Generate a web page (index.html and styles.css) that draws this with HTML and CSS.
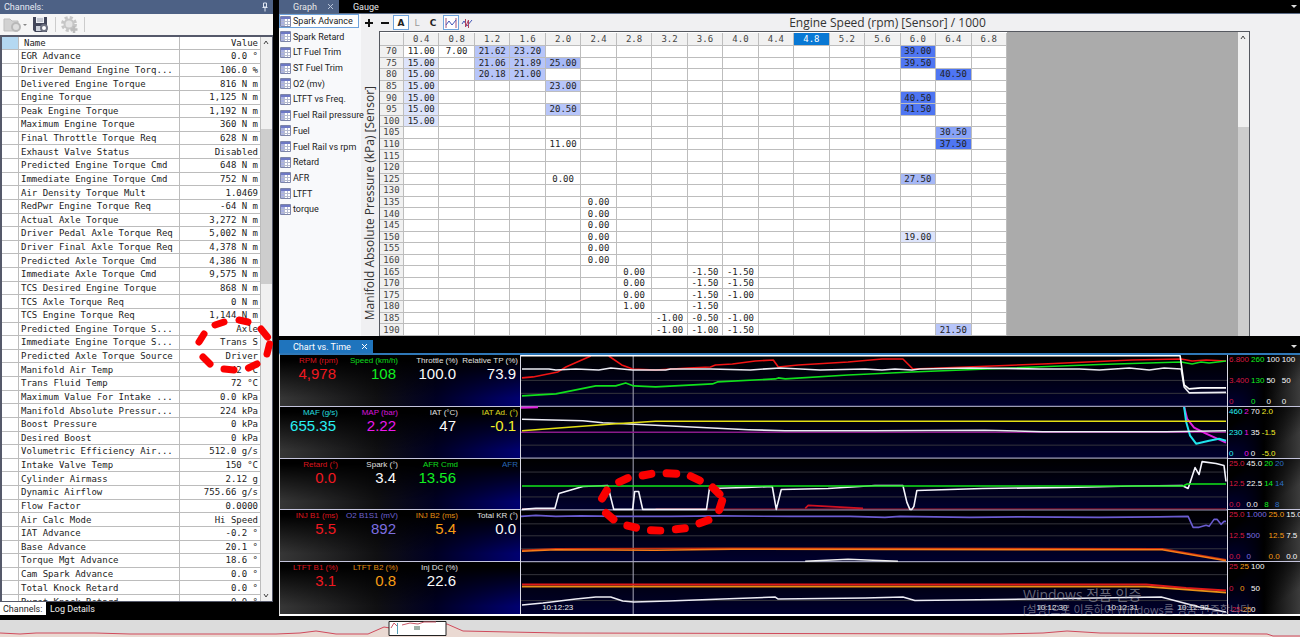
FILE: index.html
```html
<!DOCTYPE html>
<html lang="en">
<head>
<meta charset="utf-8">
<title>Log viewer</title>
<link rel="stylesheet" href="styles.css">
</head>
<body>
<div class="app">
  <aside class="channels">
    <header class="panel-title"><span>Channels:</span>
      <svg class="pin" viewBox="0 0 8 10"><path d="M2.5 1h3v4h-3zM1.5 5.5h5M4 5.500v4" fill="none" stroke="#dfe6f2"/></svg>
    </header>
    <div class="channel-tools">
      <button class="tool" aria-label="Open"><svg width="24" height="20" viewBox="0 0 24 20"><path d="M1 4h6l2 2h6v10H1z" fill="#d2d2d2" stroke="#bdbdbd"/><circle cx="13" cy="12" r="4" fill="#dedede" stroke="#b8b8b8" stroke-width="2"/><path d="M20 9h4l-2 2z" fill="#888"/></svg></button>
      <button class="tool" aria-label="Save"><svg width="18" height="20" viewBox="0 0 18 20"><path d="M1 2h14v15H3l-2-2z" fill="#43475a"/><path d="M4 2h8v6H4z" fill="#eef0f4"/><path d="M5 4h6M5 6h6" stroke="#9a9fae"/><path d="M4 11h8v5H4z" fill="#cfd3dc"/><circle cx="12" cy="13" r="3" fill="#fff" stroke="#6d7180" stroke-width="2"/></svg></button>
      <span class="rule"></span>
      <button class="tool" aria-label="Settings"><svg width="18" height="20" viewBox="0 0 18 20"><circle cx="8" cy="9" r="6.500" fill="none" stroke="#c6c6c6" stroke-width="3" stroke-dasharray="3 2.100"/><circle cx="8" cy="9" r="4.500" fill="#e4e4e4" stroke="#c6c6c6" stroke-width="2"/><path d="M13 11v7M9.500 14.500h7" stroke="#bcbcbc" stroke-width="2.500"/></svg></button>
      <span class="rule"></span>
    </div>
    <div class="list">
      <div class="list-view">
        <table class="channel-table">
          <colgroup><col class="c-mark"><col><col class="c-value"></colgroup>
          <thead><tr><th class="mark"></th><th class="name">Name</th><th class="value">Value</th></tr></thead>
          <tbody id="channel-rows"></tbody>
        </table>
      </div>
      <div class="scroll list-scroll">
        <svg viewBox="0 0 10 10"><path d="M3 7l2-3 2 3" fill="none" stroke="#444"/></svg>
        <span class="thumb"></span>
        <svg viewBox="0 0 10 10"><path d="M3 3l2 3 2-3" fill="none" stroke="#444"/></svg>
      </div>
    </div>
    <nav class="bottom-tabs"><button class="on">Channels:</button><button>Log Details</button></nav>
    <svg class="marker" width="80" height="60" viewBox="195 316 80 60"><path d="M199 342L204 334M215 325L224 322M239 320L248 322M261 329L267.500 337M269.500 344L267 354M248.500 368L257 364M224 369L234 370M203 357L210 364" stroke="#fb0000" stroke-width="7" stroke-linecap="round"/></svg>
  </aside>

  <main class="main">
    <section class="graph">
      <nav class="tabs">
        <button class="tab on">Graph<svg width="8" height="8" viewBox="0 0 8 8"><path d="M1 1l5 5M6 1l-5 5" stroke="#b9c5da"/></svg></button>
        <button class="tab">Gauge</button>
        <span class="more"></span>
      </nav>
      <div class="graph-body">
        <div class="side"><ul class="plots" id="plots"></ul></div>
        <div class="graph-view">
          <div class="graph-tools">
            <button aria-label="Add"><svg width="10" height="10"><path d="M5 1v8M1 5h8" stroke="#111" stroke-width="2"/></svg></button>
            <button aria-label="Remove"><svg width="10" height="10"><path d="M1 5h8" stroke="#111" stroke-width="2"/></svg></button>
            <button class="boxed">A</button>
            <button class="dim">L</button>
            <button>C</button>
            <button class="boxed lines" aria-label="Lines"><svg width="12" height="10"><path d="M1 0v10M11 0v10" stroke="#a0527e"/><path d="M1 7l3-4 3 4 4-5" fill="none" stroke="#4356b8"/></svg></button>
            <button aria-label="Compare"><svg width="12" height="10"><path d="M1 6l2-3 3 5 5-6" fill="none" stroke="#4356b8"/><path d="M4.500 1v8l3-7v8" fill="none" stroke="#b0405e"/></svg></button>
            <h2>Engine Speed (rpm) [Sensor] / 1000</h2>
          </div>
          <div class="matrix-area">
            <div class="axis"><span>Manifold Absolute Pressure (kPa) [Sensor]</span></div>
            <div class="matrix-box">
              <table class="matrix"><thead><tr id="matrix-head"></tr></thead><tbody id="matrix-rows"></tbody></table>
              <div class="scroll matrix-scroll"><svg viewBox="0 0 10 10"><path d="M3 7l2-3 2 3" fill="none" stroke="#444"/></svg><span class="thumb"></span></div>
            </div>
          </div>
        </div>
      </div>
    </section>

    <section class="chart">
      <nav class="tabs">
        <button class="tab active">Chart vs. Time<svg width="8" height="8" viewBox="0 0 8 8"><path d="M1 1l5 5M6 1l-5 5" stroke="#fff"/></svg></button>
        <span class="more"></span>
      </nav>
      <div class="chart-body">
        <div class="readings" id="readings"></div>
        <div class="plot">
          <svg class="traces" viewBox="0 0 708 260" preserveAspectRatio="none">
            <defs><linearGradient id="sky" x1="0" y1="0" x2="0" y2="1"><stop offset="0" stop-color="#000"/><stop offset=".3" stop-color="#00000c"/><stop offset="1" stop-color="#00002e"/></linearGradient></defs>
            <g fill="url(#sky)"><path d="M0 0h708v52H0z"/><path d="M0 52h708v52H0z"/><path d="M0 104h708v52H0z"/><path d="M0 156h708v52H0z"/><path d="M0 208h708v52H0z"/></g>
            <path d="M0 25.500h708M0 38.500h708M0 90.500h708M0 117.500h708M0 142.500h708M0 169.500h708M0 181.500h708M0 194.500h708M0 220.500h708M0 246.500h708" stroke="#34343c"/>
            <path d="M0 51.500h708M0 103.500h708M0 155.500h708M0 207.500h708" stroke="#c4c4dc"/>
            <path d="M112.500 0v260" stroke="#a9a9bb"/>
            <g fill="none" stroke-width="1.600" stroke-linejoin="round">
              <path stroke="#f01414" d="M1 23L12 22 37 17 45 12 70 1M88 1L101 10 112 14 135 15 168 13 190 12 195 10 212 9 235 6 253 5 258 12 278 10 328 7 362 4 383 4 393 14 447 12 523 9 613 5 662 4 673 6 687 5 707 6"/>
              <path stroke="#10e01c" d="M1 41L35 39 55 35 75 31 95 31 105 28 113 31 135 32 192 29 197 27 255 24 258 23 265 24 328 20 392 17 480 13.500 580 9.500 662 7 673 9 682 7 690 8 707 6"/>
              <path stroke="#ececf4" d="M1 14H28L35 15 55 14 78 15 90 13 112 15 145 15 150 14 190 14 230 15 260 13 300 15 345 14 362 15 375 14 392 15 400 14 450 13 520 14 560 14 580 15 610 13 630 15 645 13 662 14 665 32 670 38 707 37.500"/>
              <path stroke="#fff" d="M0 .800H661L665 30 670 34 682 33 707 33"/>
              <path stroke="#8a1a8a" d="M0 77.500H707"/>
              <path stroke="#e020e0" stroke-width="2" d="M0 53L17 52.500M665 52L668 64 675 73 687 79 707 88"/>
              <path stroke="#20e4ec" stroke-width="2" d="M665 52L667 67 671 81 677 89 690 86 700 84 707 86"/>
              <path stroke="#ececf4" d="M1 64.500L62 66 82 68 145 71 228 75 265 76 353 76 465 75.500 523 77 647 77 707 76"/>
              <path stroke="#e4e014" d="M1 76L95 69 135 66.500 707 66.500"/>
              <path stroke="#8c1428" stroke-width="1" d="M135 154.500H707M1 154.500H34"/>
              <path stroke="#d01020" d="M285 154L288 151 343 154"/>
              <path stroke="#f4f4fc" d="M1 155L15 154 34 154 38 139 62 132 87 131 93 155H112L114 137 118 137 122 155H186L189 134 225 133 252 132 256 155 261 135 308 134 355 131 383 131 387 148 390 155 392 155 394 152 397 136 463 134 547 133 613 131.500 663 131 669 134 676 113 680 120 683 107 697 109 705 111 707 127"/>
              <path stroke="#10e41a" d="M1 131.500L664 131.500 668 129.500 707 129.500"/>
              <path stroke="#6a5cd0" d="M0 162L15 161 35 162 60 161.500 95 162 150 162 200 161.500 270 162 330 162 365 163 380 162 450 163 500 162.500 580 163 640 162.500 669 162 674 173 680 173 687 171 690 172 695 165 698 165 702 170 705 167 707 167"/>
              <path stroke="#c83010" d="M1 196L35 194.500 212 194 643 194.500 707 205.500"/>
              <path stroke="#f87c18" d="M1 197L35 195.500 135 196 212 195 643 195.500 707 206.500"/>
              <path stroke="#eee" d="M285 207L328 205 378 207"/>
              <path stroke="#e01818" stroke-width="2" d="M1 230.500H627L667 234 707 236.500"/>
              <path stroke="#e89018" d="M1 232.500H627L707 238.500"/>
              <path stroke="#ececf4" d="M1 251L22 249 55 245 75 243 90 243 102 247 113 248 148 247 202 245 255 243 258 245 345 244 383 243 395 246.500 480 245.500 642 243 680 253 707 258"/>
            </g>
            <g transform="translate(-520 -355)"><path d="M618.500 482.500L627 478.500M642 476L650.700 474.300M666 473.700L675.700 474.300M690.300 476.700L699.300 481M712.300 488L719 494.700M721.700 501.300L718.700 510.700M699 524L708 520.700M675.300 530L684.300 529M650.300 531L659.700 531.300M626.700 526.300L635.300 528.300M605.300 513.700L612.700 520M601.300 499L606 491" stroke="#fb0000" stroke-width="8" stroke-linecap="round"/></g>
          </svg>
          <span class="time t1">10:12:23</span><span class="time t2">10:12:30</span><span class="time t3">10:12:31</span><span class="time t4">10:12:32</span>
        </div>
        <div class="scales" id="scales"></div>
        <div class="watermark" lang="ko"><p class="wm-title">Windows 정품 인증</p><p>[설정]으로 이동하여 Windows를 정품 인증합니다</p></div>
      </div>
    </section>
  </main>

  <footer class="overview">
    <svg viewBox="0 0 1300 17" preserveAspectRatio="none">
      <path d="M0 13L20 14 36 13 95 13 130 14 276 14 300 13 316 11 336 14 368 14 384 7 390 8 447 4 463 11 509 12 560 13 1000 14 1043 13 1067 11 1100 13 1267 14 1273 16 1300 16V17H0z" fill="#ead9d2"/>
      <path d="M0 13L20 14 36 13 95 13 130 14 276 14 300 13 316 11 336 14 368 14 384 7 390 8 447 4 463 11 509 12 560 13 1000 14 1043 13 1067 11 1100 13 1267 14 1273 16 1300 16" fill="none" stroke="#d04a5c"/>
      <path d="M389 1.500h57v14h-57z" fill="#fff" stroke="#222"/>
      <path d="M391 8L394 3 397 6M402 5L410 3 418 4 424 2 436 2" fill="none" stroke="#c85868"/><path d="M397.500 3v11" stroke="#58a0b8"/><path d="M414 6h6v4h-6z" fill="#9fb0a8"/>
    </svg>
  </footer>
</div>
<script src="app.js"></script>
</body>
</html>
```
FILE: styles.css
```css
* { box-sizing: border-box; }
body { margin: 0; font: 9px/12px Roboto, "Noto Sans", sans-serif; color: #222; background: #000; }
button { border: 0; padding: 0; margin: 0; background: none; font: inherit; color: inherit; }
svg { display: block; flex: none; }
h2, p, ul { margin: 0; padding: 0; }
table { border-spacing: 0; table-layout: fixed; }
th, td { padding: 0; font-weight: 400; white-space: nowrap; }

.app { display: grid; grid-template: minmax(0, 1fr) 17px / 279px minmax(0, 1fr); height: 100vh; }

/* channel list */
.channels { position: relative; display: flex; flex-direction: column; min-height: 0; margin: 0 6px 5px 0; }
.panel-title { display: flex; justify-content: space-between; align-items: center; height: 14px; padding: 0 4px; background: #4d6185; color: #e6ebf4; }
.pin { width: 8px; height: 10px; }
.channel-tools { display: flex; align-items: center; gap: 5px; height: 21px; padding: 0 3px; background: #f6f6f6; }
.rule { width: 1px; height: 15px; background: #ccc; }
.list { display: flex; flex: 1; min-height: 0; border: solid #55596a; border-width: 2px 1px 1px 2px; background: #fff; }
.list-view { flex: 1; min-height: 0; overflow: hidden; }
.channel-table { width: 100%; height: calc(100% + 8px); font: 9px/12px "DejaVu Sans Mono", monospace; }
.channel-table th, .channel-table td { border: solid #bcbcbc; border-width: 0 1px 1px 0; overflow: hidden; }
.channel-table .c-mark { width: 17px; }
.channel-table .c-value { width: 81px; }
.channel-table .mark { background: #b4d8f1; }
.channel-table .name { text-align: left; padding-left: 5px; }
.channel-table td.name { padding-left: 2px; }
.channel-table .value { text-align: right; padding-right: 2px; }
.scroll { display: flex; flex-direction: column; width: 11px; background: #f0f0f0; }
.scroll svg { width: 10px; height: 10px; }
.scroll .thumb { background: #cdcdcd; }
.list-scroll .thumb { height: 155px; margin: 82px 0 auto; }
.bottom-tabs { display: flex; height: 13px; color: #eee; }
.bottom-tabs button { padding: 0 4px; }
.bottom-tabs .on { width: 46px; padding: 0 3px; background: #fff; color: #222; text-align: left; }
.marker { position: absolute; left: 195px; top: 316px; }

/* tabs */
.main { display: grid; grid-template-rows: minmax(0, 336fr) minmax(0, 280fr); min-width: 0; padding-bottom: 4px; }
.tabs { display: flex; align-items: center; color: #e8e8e8; }
.tab { display: flex; align-items: center; gap: 10px; height: 13px; padding: 0 4px 0 14px; }
.tab.on { background: #4d6185; }
.tab.active { background: #1f74bd; color: #fff; }
.more { margin: 0 3px 0 auto; border: solid transparent; border-width: 3px 3px 0; border-top-color: #ddd; }

/* graph */
.graph { display: flex; flex-direction: column; min-height: 0; }
.graph-body { display: flex; flex: 1; min-height: 0; border-top: 1px solid #5b6b86; background: #f0f0f2; }
.side { width: 82px; flex: none; background: #f8f9fb; }
.plots { display: grid; grid-auto-rows: 1fr; height: 204px; list-style: none; }
.plots button { display: flex; align-items: center; gap: 2px; width: 80px; height: 14px; padding: 0 1px; white-space: nowrap; }
.plots .on { border: 1px solid #6ea3dc; padding: 0; background: #fff; }
.graph-view { display: flex; flex-direction: column; flex: 1; min-width: 0; }
.graph-tools { display: flex; align-items: center; height: 17px; }
.graph-tools button { display: grid; place-items: center; flex: none; width: 16px; height: 15px; font: 700 9px/12px "DejaVu Sans", sans-serif; }
.graph-tools .boxed { border: 1px solid #6ea3dc; background: #fff; }
.graph-tools .lines { margin-left: 2px; }
.graph-tools .dim { color: #999; font-weight: 400; }
.graph-tools h2 { margin: 0 auto; font: 12px/16px "Open Sans", sans-serif; color: #333; }
.matrix-area { display: flex; flex: 1; min-height: 0; }
.axis { display: flex; align-items: flex-end; width: 18px; padding-bottom: 16px; flex: none; }
.axis span { writing-mode: vertical-rl; transform: rotate(180deg); font: 12px/18px "Open Sans", sans-serif; color: #333; white-space: nowrap; }
.matrix-box { display: flex; justify-content: space-between; flex: 1; margin-right: 50px; border: solid #55585f; border-width: 1px 1px 0 1px; background: #ababab; }
.matrix { width: 627px; height: 100%; padding-top: 1px; font: 9px/10px "DejaVu Sans Mono", monospace; text-align: center; background: #fff; }
.matrix th, .matrix td { border: solid #bdbdbd; border-width: 0 1px 1px 0; }
.matrix th { background: #f1f1f1; color: #444; }
.matrix thead th { height: 13px; line-height: 12px; }
.matrix th.row { width: 24px; }
.matrix .picked { background: #0878d4; color: #fff; }
.matrix .h1 { background: #dde4fb; }
.matrix .h2 { background: #b7c5f9; }
.matrix .h3 { background: #a6b8f6; }
.matrix .h4 { background: #88a2f7; }
.matrix .h5 { background: #4f76f2; }
.matrix-scroll svg { margin-bottom: 85px; }
.matrix-scroll .thumb { flex: 1; }

/* time chart */
.chart { display: flex; flex-direction: column; min-height: 0; padding-top: 4px; }
.chart-body { position: relative; display: grid; grid-template-columns: 240px minmax(0, 1fr) 72px; flex: 1; min-height: 0; border-top: 2px solid #2f78b8; border-left: 1px solid #ddd; border-bottom: 2px solid #fff; font: 8px/9px "Liberation Sans", Arial, sans-serif; }
.readings, .scales { display: grid; grid-template-rows: repeat(5, minmax(0, 1fr)); min-height: 0; }
.reading-row { display: grid; grid-template-columns: repeat(4, 60px); padding-top: 1px; border-bottom: 1px solid #c4c4dc; text-align: right; background: linear-gradient(#000 10%, transparent 85%), linear-gradient(to right, #363636, #101012 40%, #000024 65%, #000070); }
.reading-row:last-child, .scale-row:last-child { border-bottom: 0; }
.reading-row p { padding-right: 2px; white-space: nowrap; opacity: .9; }
.reading-row strong { display: block; padding-right: 4px; font-size: 15px; line-height: 18px; font-weight: 400; }
.plot { position: relative; border: solid #d8d8e4; border-width: 0 1px; min-height: 0; }
.traces { position: absolute; width: 100%; height: 100%; }
.time { position: absolute; bottom: 2px; color: #eee; }
.t1 { left: 3%; } .t2 { left: 73%; } .t3 { left: 83%; } .t4 { left: 93%; }
.scale-row { display: flex; gap: 2px; padding: 0 0 0 1px; border-bottom: 1px solid #c4c4dc; background: linear-gradient(to bottom right, #000 20%, transparent 75%), linear-gradient(to right, #000060, #000 50%, #3c3c3c); overflow: hidden; }
.scale { display: flex; flex-direction: column; justify-content: space-between; white-space: nowrap; }
.scale.narrow { width: 9px; }
.red { color: #f01820; } .crimson { color: #d81840; } .green { color: #10f020; } .white { color: #fafafa; } .cyan { color: #28f0f4; }
.magenta { color: #ec18ec; } .yellow { color: #f4f028; } .blue { color: #2c70c8; } .violet { color: #7c6ee0; } .orange { color: #f89c14; }
.watermark { position: absolute; left: 743px; bottom: -3px; width: 270px; color: rgba(170, 170, 180, .6); font: 11px/14px "Open Sans", "Noto Sans CJK KR", sans-serif; white-space: nowrap; }
.wm-title { font-size: 14px; line-height: 17px; }

.overview { grid-column: 1 / -1; background: #dcdcdc; }
.overview svg { width: 100%; height: 100%; }
```
FILE: app.js
```js
const channels = [
  ["EGR Advance", "0.0 °"], ["Driver Demand Engine Torq...", "106.0 %"], ["Delivered Engine Torque", "816 N m"],
  ["Engine Torque", "1,125 N m"], ["Peak Engine Torque", "1,192 N m"], ["Maximum Engine Torque", "360 N m"],
  ["Final Throttle Torque Req", "628 N m"], ["Exhaust Valve Status", "Disabled"], ["Predicted Engine Torque Cmd", "648 N m"],
  ["Immediate Engine Torque Cmd", "752 N m"], ["Air Density Torque Mult", "1.0469"], ["RedPwr Engine Torque Req", "-64 N m"],
  ["Actual Axle Torque", "3,272 N m"], ["Driver Pedal Axle Torque Req", "5,002 N m"], ["Driver Final Axle Torque Req", "4,378 N m"],
  ["Predicted Axle Torque Cmd", "4,386 N m"], ["Immediate Axle Torque Cmd", "9,575 N m"], ["TCS Desired Engine Torque", "868 N m"],
  ["TCS Axle Torque Req", "0 N m"], ["TCS Engine Torque Req", "1,144 N m"], ["Predicted Engine Torque S...", "Axle"],
  ["Immediate Engine Torque S...", "Trans S"], ["Predicted Axle Torque Source", "Driver"], ["Manifold Air Temp", "42 °C"],
  ["Trans Fluid Temp", "72 °C"], ["Maximum Value For Intake ...", "0.0 kPa"], ["Manifold Absolute Pressur...", "224 kPa"],
  ["Boost Pressure", "0 kPa"], ["Desired Boost", "0 kPa"], ["Volumetric Efficiency Air...", "512.0 g/s"],
  ["Intake Valve Temp", "150 °C"], ["Cylinder Airmass", "2.12 g"], ["Dynamic Airflow", "755.66 g/s"],
  ["Flow Factor", "0.0000"], ["Air Calc Mode", "Hi Speed"], ["IAT Advance", "-0.2 °"], ["Base Advance", "20.1 °"],
  ["Torque Mgt Advance", "18.6 °"], ["Cam Spark Advance", "0.0 °"], ["Total Knock Retard", "0.0 °"], ["Burst Knock Retard", "0.0 °"]
];
document.getElementById("channel-rows").innerHTML = channels
  .map(([name, value]) => `<tr><td></td><td class="name">${name}</td><td class="value">${value}</td></tr>`).join("");

const plots = ["Spark Advance", "Spark Retard", "LT Fuel Trim", "ST Fuel Trim", "O2 (mv)", "LTFT vs Freq.", "Fuel Rail pressure",
  "Fuel", "Fuel Rail vs rpm", "Retard", "AFR", "LTFT", "torque"];
const icon = '<svg width="11" height="11" viewBox="0 0 11 11"><path d="M.5 .5h10v10H.5z" fill="#fff" stroke="#7c84a8"/><path d="M1 1h9v2H1z" fill="#6d78c4"/><path d="M1 3h3v7H1z" fill="#a9b0e2"/><path d="M4.500 3v7M7.500 3v7M1 5.500h9M1 8.500h9" stroke="#b4bad0" fill="none"/></svg>';
document.getElementById("plots").innerHTML = plots
  .map((name, i) => `<li><button class="${i ? "" : "on"}">${icon}${name}</button></li>`).join("");

/* pressure -> { speed: value } */
const speeds = Array.from({ length: 17 }, (_, i) => ((i + 1) * 0.4).toFixed(1));
const cells = {
  70: { "0.4": "11.00", "0.8": "7.00", "1.2": "21.62", "1.6": "23.20", "6.0": "39.00" },
  75: { "0.4": "15.00", "1.2": "21.06", "1.6": "21.89", "2.0": "25.00", "6.0": "39.50" },
  80: { "0.4": "15.00", "1.2": "20.18", "1.6": "21.00", "6.4": "40.50" },
  85: { "0.4": "15.00", "2.0": "23.00" },
  90: { "0.4": "15.00", "6.0": "40.50" },
  95: { "0.4": "15.00", "2.0": "20.50", "6.0": "41.50" },
  100: { "0.4": "15.00" },
  105: { "6.4": "30.50" },
  110: { "2.0": "11.00", "6.4": "37.50" },
  125: { "2.0": "0.00", "6.0": "27.50" },
  135: { "2.4": "0.00" }, 140: { "2.4": "0.00" }, 145: { "2.4": "0.00" },
  150: { "2.4": "0.00", "6.0": "19.00" }, 155: { "2.4": "0.00" }, 160: { "2.4": "0.00" },
  165: { "2.8": "0.00", "3.6": "-1.50", "4.0": "-1.50" },
  170: { "2.8": "0.00", "3.6": "-1.50", "4.0": "-1.50" },
  175: { "2.8": "0.00", "3.6": "-1.50", "4.0": "-1.00" },
  180: { "2.8": "1.00", "3.6": "-1.50" },
  185: { "3.2": "-1.00", "3.6": "-0.50", "4.0": "-1.00" },
  190: { "3.2": "-1.00", "3.6": "-1.00", "4.0": "-1.50", "6.4": "21.50" }
};
const heat = v => v >= 35 ? "h5" : v >= 30 ? "h4" : v >= 24 ? "h3" : v >= 20 ? "h2" : v >= 15 ? "h1" : "";
document.getElementById("matrix-head").innerHTML = '<th class="row"></th>' +
  speeds.map(s => `<th class="${s === "4.8" ? "picked" : ""}">${s}</th>`).join("");
let body = "";
for (let p = 70; p <= 190; p += 5) {
  const row = cells[p] || {};
  body += `<tr><th class="row">${p}</th>` + speeds.map(s => `<td class="${heat(Number(row[s] || 0))}">${row[s] || ""}</td>`).join("") + "</tr>";
}
document.getElementById("matrix-rows").innerHTML = body;

const readings = [
  [["RPM (rpm)", "4,978", "red"], ["Speed (km/h)", "108", "green"], ["Throttle (%)", "100.0", "white"], ["Relative TP (%)", "73.9", "white"]],
  [["MAF (g/s)", "655.35", "cyan"], ["MAP (bar)", "2.22", "magenta"], ["IAT (°C)", "47", "white"], ["IAT Ad. (°)", "-0.1", "yellow"]],
  [["Retard (°)", "0.0", "red"], ["Spark (°)", "3.4", "white"], ["AFR Cmd", "13.56", "green"], ["AFR", "", "blue"]],
  [["INJ B1 (ms)", "5.5", "red"], ["O2 B1S1 (mV)", "892", "violet"], ["INJ B2 (ms)", "5.4", "orange"], ["Total KR (°)", "0.0", "white"]],
  [["LTFT B1 (%)", "3.1", "red"], ["LTFT B2 (%)", "0.8", "orange"], ["Inj DC (%)", "22.6", "white"]]
];
document.getElementById("readings").innerHTML = readings.map(row => '<div class="reading-row">' +
  row.map(([label, value, tone]) => `<div class="${tone}"><p>${label}</p><strong>${value}</strong></div>`).join("") + "</div>").join("");

const scales = [
  [["crimson", "6.800", "3.400", "0"], ["green", "260", "130", "0"], ["white", "100", "50", "0"], ["white", "100", "50", "0"]],
  [["cyan", "460", "230", "0"], ["magenta", "2", "1", "0"], ["white", "70", "35", "0"], ["yellow", "2.0", "-1.5", "-5.0"]],
  [["crimson", "25.0", "12.5", "0.0"], ["white", "45.0", "22.5", "0.0"], ["green", "20", "14", "8"], ["blue", "20", "14", "8"]],
  [["crimson", "25.0", "12.5", "0.0"], ["violet", "1.000", "500", "0"], ["orange", "25.0", "12.5", "0.0"], ["white", "15.0", "7.5", "0.0"]],
  [["crimson narrow", "25", "0", "-25"], ["orange narrow", "25", "0", "-25"], ["white", "100", "50", "0"]]
];
document.getElementById("scales").innerHTML = scales.map(row => '<div class="scale-row">' +
  row.map(([tone, ...marks]) => `<div class="scale ${tone}">${marks.map(m => `<span>${m}</span>`).join("")}</div>`).join("") + "</div>").join("");
```
